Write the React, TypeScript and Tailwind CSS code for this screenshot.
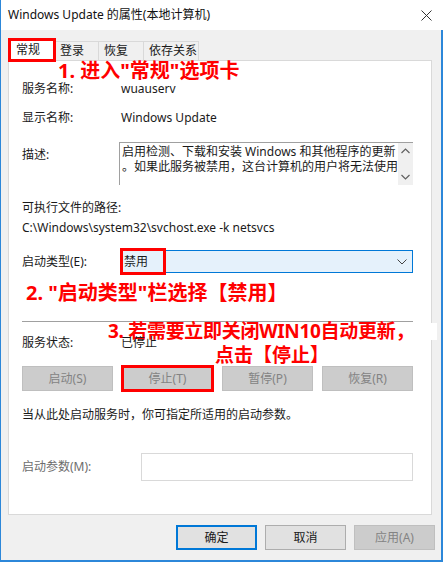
import React from "react";

// Windows Update 服务属性对话框（带红色标注）

const tabs = ["登录", "恢复", "依存关系"];
const tabWidths = ["w-[44px]", "w-[45px]", "w-[55px]"];

function ActionButton({ label, marked }: { label: string; marked?: boolean }) {
  return (
    <div className="relative flex h-[25px] items-center justify-center border border-[#bfbfbf] bg-[#cccccc] text-[12px] text-[#838383]">
      {label}
      {marked && (
        <div className="absolute -inset-[2px] border-[3px] border-[#ff0000]" />
      )}
    </div>
  );
}

export default function App() {
  return (
    <div className="flex h-[562px] w-[443px] flex-col bg-white font-['Noto_Sans','Noto_Sans_CJK_SC',sans-serif] text-[12px] text-[#1a1a1a]">
      {/* 标题栏 */}
      <div className="flex h-[30px] items-center justify-between border-l border-[#2c87d9] pl-[7px] pr-[11px]">
        <span className="text-[12px] text-[#111]">Windows Update 的属性(本地计算机)</span>
        <svg width="11" height="11" viewBox="0 0 11 11">
          <path d="M0.5 0.5 L10.5 10.5 M10.5 0.5 L0.5 10.5" stroke="#333" strokeWidth="1" />
        </svg>
      </div>

      <div className="flex flex-1 flex-col border-b-2 border-l border-r-2 border-[#2c87d9] bg-[#f0f0f0]">
        {/* 选项卡 */}
        <div className="ml-[7px] mt-[8px] flex h-[22px] items-end">
          <div className="relative z-10 -mb-px flex h-[23px] w-[47px] items-start border-x border-t border-[#d9d9d9] bg-white pl-[7px] pt-[2px]">
            常规
            <div className="absolute -left-[1px] -top-[1px] h-[24px] w-[48px] border-[3px] border-[#ff0000]" />
          </div>
          {tabs.map((t, i) => (
            <div
              key={t}
              className={`flex h-[19px] items-center border-r border-t border-[#d9d9d9] pl-[5px] ${tabWidths[i]}`}
            >
              {t}
            </div>
          ))}
        </div>

        {/* 常规面板 */}
        <div className="relative ml-[7px] mr-[9px] h-[455px] border border-[#d9d9d9] bg-white pl-[13px] pr-[18px]">
          <div className="absolute left-[49px] top-[-2px] whitespace-nowrap text-[20px] font-bold leading-[24px] text-[#ff0000]">
            1. 进入"常规"选项卡
          </div>

          <div className="mt-[18px] flex h-[20px] items-center">
            <span className="w-[99px]">服务名称:</span>
            <span>wuauserv</span>
          </div>
          <div className="mt-[9px] flex h-[20px] items-center">
            <span className="w-[99px]">显示名称:</span>
            <span>Windows Update</span>
          </div>

          <div className="mt-[14px] flex">
            <span className="w-[99px] pt-[3px] leading-[20px]">描述:</span>
            <div className="flex h-[43px] flex-1 border-l border-t border-[#a0a0a0]">
              <div className="flex-1 overflow-hidden whitespace-nowrap pl-[2px] pt-[1px] leading-[15px]">
                启用检测、下载和安装 Windows 和其他程序的更新
                <br />
                。如果此服务被禁用，这台计算机的用户将无法使用
              </div>
              <div className="flex w-[15px] flex-col items-center justify-between bg-[#f0f0f0] py-[5px]">
                <svg width="9" height="6" viewBox="0 0 9 6">
                  <polyline points="0.5,5 4.5,1 8.5,5" fill="none" stroke="#606060" strokeWidth="1.2" />
                </svg>
                <svg width="9" height="6" viewBox="0 0 9 6">
                  <polyline points="0.5,1 4.5,5 8.5,1" fill="none" stroke="#606060" strokeWidth="1.2" />
                </svg>
              </div>
            </div>
          </div>

          <div className="mt-[14px] h-[18px] leading-[18px]">可执行文件的路径:</div>
          <div className="mt-[2px] h-[18px] leading-[18px]">C:\Windows\system32\svchost.exe -k netsvcs</div>

          <div className="mt-[13px] flex h-[23px] items-center">
            <span className="w-[98px]">启动类型(E):</span>
            <div className="relative flex h-[23px] flex-1 items-center justify-between border border-[#0078d7] bg-[#e5f1fb] pl-[3px] pr-[5px]">
              <span>禁用</span>
              <svg width="10" height="6" viewBox="0 0 10 6">
                <polyline points="0.5,0.5 5,5 9.5,0.5" fill="none" stroke="#444" strokeWidth="1" />
              </svg>
              <div className="absolute -left-[1px] -top-[3px] h-[27px] w-[46px] border-[3px] border-[#ff0000]" />
            </div>
          </div>

          <div className="absolute left-[17px] top-[220px] whitespace-nowrap text-[20px] font-bold leading-[24px] text-[#ff0000]">
            2. "启动类型"栏选择【禁用】
          </div>

          <div className="mt-[48px] h-px bg-[#a0a0a0]" />

          <div className="relative z-10 mt-[11px] flex h-[20px] items-center">
            <span className="w-[99px]">服务状态:</span>
            <span>已停止</span>
          </div>

          <div className="absolute left-[98px] top-[262px] w-[330px] whitespace-nowrap text-center text-[19px] font-bold leading-[17px] text-[#ff0000]">
            <div className="bg-white pl-[1px] text-left tracking-[-0.3px]">3. 若需要立即关闭WIN10自动更新，</div>
            <div className="mt-[7px] inline-block bg-white px-[2px]">点击【停止】</div>
          </div>

          <div className="mt-[13px] grid grid-cols-4 gap-[9px]">
            <ActionButton label="启动(S)" />
            <ActionButton label="停止(T)" marked />
            <ActionButton label="暂停(P)" />
            <ActionButton label="恢复(R)" />
          </div>

          <div className="mt-[14px] h-[20px] leading-[20px]">当从此处启动服务时，你可指定所适用的启动参数。</div>

          <div className="mt-[28px] flex h-[28px] items-center">
            <span className="w-[119px] text-[#6d6d6d]">启动参数(M):</span>
            <div className="h-[28px] flex-1 border border-[#d9d9d9] bg-white" />
          </div>
        </div>

        {/* 底部按钮 */}
        <div className="mr-[6px] mt-[10px] flex justify-end gap-[8px]">
          <div className="flex h-[25px] w-[81px] items-center justify-center border-2 border-[#0078d7] bg-[#e1e1e1]">
            确定
          </div>
          <div className="flex h-[25px] w-[81px] items-center justify-center border border-[#adadad] bg-[#e1e1e1]">
            取消
          </div>
          <div className="flex h-[25px] w-[81px] items-center justify-center border border-[#bfbfbf] bg-[#cccccc] text-[#838383]">
            应用(A)
          </div>
        </div>
      </div>
    </div>
  );
}
